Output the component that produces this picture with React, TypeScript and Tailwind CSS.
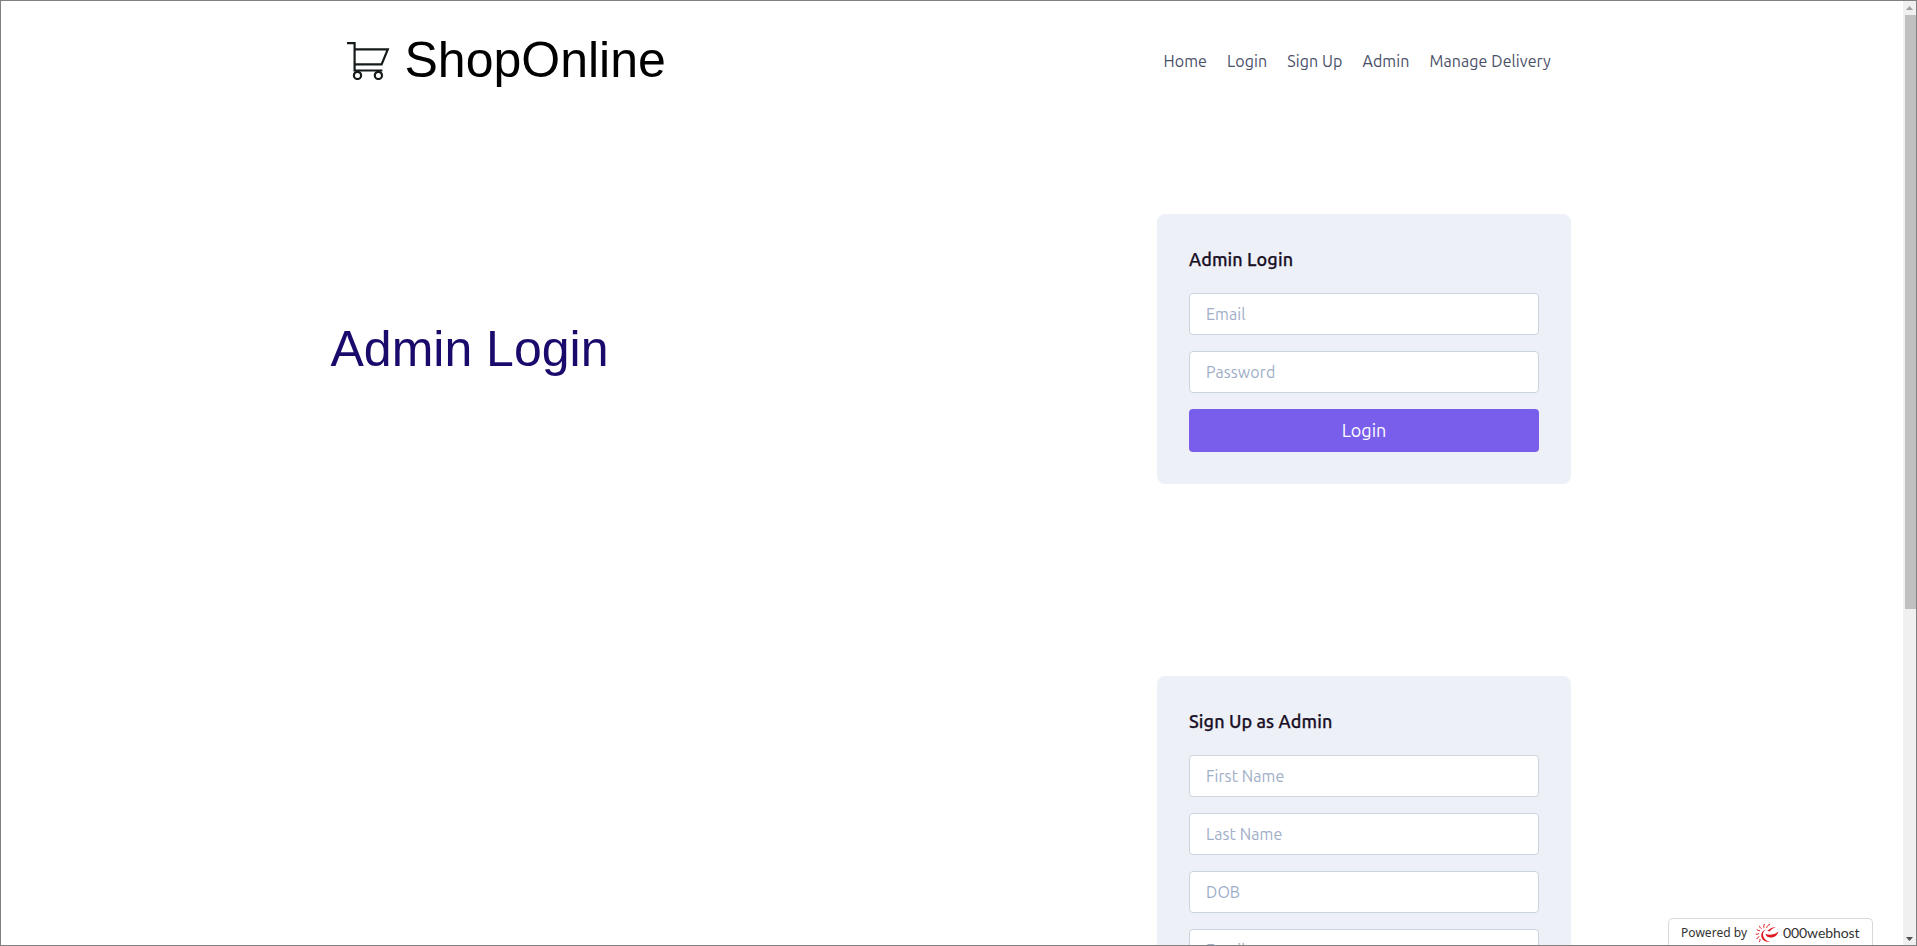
import React from "react";

const links = ["Home", "Login", "Sign Up", "Admin", "Manage Delivery"];

function CartIcon() {
  return (
    <svg width="44" height="40" viewBox="0 0 44 40" fill="none" stroke="#151a1a" strokeWidth="2.2" className="block">
      <path d="M1 3.2h7.600v27.300h27.800" />
      <path d="M8.600 9.300h33.200l-6.200 15H8.600" />
      <circle cx="11.500" cy="35.400" r="3.600" />
      <circle cx="32.400" cy="35.400" r="3.600" />
    </svg>
  );
}

function HostLogo() {
  return (
    <svg width="24" height="20" viewBox="0 0 24 20" fill="none" stroke="#e0151f" strokeLinecap="round" className="block shrink-0">
      <path d="M11 6.500C8 8 7.300 11.500 8.800 14.400c1.400 2.600 3.800 3.900 6.400 4.100-3.200 1.100-7.200-.3-8.500-3.700C5.400 11.200 7.300 7.500 11 6.500z" fill="#e0151f" stroke="none" />
      <path d="M10.500 11c4 1.600 9.200.8 13-2.400-1.300 4.400-5 6.400-8.600 5.900-2.500-.3-4-1.500-4.400-3.500z" fill="#e0151f" stroke="none" />
      <path d="M12.500 7.800c2.300-2.400 5-3.900 8.300-3.600-2.600.8-4.500 2-6.300 4.300z" fill="#e0151f" stroke="none" />
      <path d="M11.700 4.500c.4-1.500 1.500-2.600 3-3M8.800 4.300c-.2-1.100 0-2.100.5-3M6.300 5.500C5.200 4.900 4.600 4 4.500 3.200M4.700 7.800c-1.100-.1-2-.5-2.700-1.100M3.700 10.700c-.8.500-1.700.7-2.700.5M3.900 13.600c-.4.900-1.100 1.600-2 2M5.100 16.300c.1.900-.2 1.600-.7 2.300" strokeWidth="1" />
    </svg>
  );
}

function Field({ label }: { label: string }) {
  return (
    <input
      placeholder={label}
      className="block h-[42px] w-full rounded-[4px] border border-[#cbd5e0] bg-white px-4 pt-0 pb-px text-base leading-6 tracking-[0.08px] text-[#4a5568] placeholder:text-[#a0aec8] placeholder:opacity-100"
    />
  );
}

function Card({ title, className, children }: { title: string; className: string; children: React.ReactNode }) {
  return (
    <section className={`w-[414px] rounded-lg bg-[#edf0f7] px-8 pt-8 ${className}`}>
      <h2 className="h-[47px] text-lg leading-[27px] font-medium tracking-[0.1px] whitespace-nowrap text-[#1a1026] [-webkit-text-stroke:0.25px_#1a1026]">{title}</h2>
      <div className="flex flex-col gap-4">{children}</div>
    </section>
  );
}

export default function App() {
  return (
    <div className="flex h-[946px] w-[1917px] overflow-hidden border border-[#808080] bg-white font-['Ubuntu','Noto_Sans',sans-serif]">
      <div className="relative min-w-0 flex-1 overflow-hidden pl-[329px]">
        <header className="flex h-[120px] items-center pb-[2px]">
          <div className="flex w-[833.500px] items-center pl-4">
            <CartIcon />
            <span className="ml-[14.500px] font-['Liberation_Sans',sans-serif] text-[50px] leading-[60px] text-black">ShopOnline</span>
          </div>
          <nav className="flex gap-5 pt-[2px] text-base tracking-[0.09px] text-[#4a5068]">
            {links.map((label) => (
              <a key={label} className="whitespace-nowrap">{label}</a>
            ))}
          </nav>
        </header>

        <main className="flex">
          <h1 className="w-[827px] pt-[198px] pl-[0.5px] font-['Liberation_Sans',sans-serif] text-[50px] leading-[60px] text-[#190a6b]">Admin Login</h1>
          <div className="pt-[93px]">
            <Card title="Admin Login" className="h-[270px]">
              <Field label="Email" />
              <Field label="Password" />
              <button className="h-[43px] w-full rounded-[4px] bg-[#795eeb] pb-[2px] text-lg leading-7 text-white">Login</button>
            </Card>
            <Card title="Sign Up as Admin" className="mt-[192px] h-[500px]">
              <Field label="First Name" />
              <Field label="Last Name" />
              <Field label="DOB" />
              <Field label="Email" />
            </Card>
          </div>
        </main>

        <div className="absolute right-[30px] bottom-0 flex h-[27px] w-[205px] items-center rounded-t-[5px] border border-b-0 border-[#d9d9d9] bg-white pt-px pl-[12px] font-['Noto_Sans',sans-serif] text-[#333]">
          <span className="w-[74px] text-[12px] tracking-[0.05px] whitespace-nowrap">Powered by</span>
          <HostLogo />
          <span className="ml-[4px] font-['Lato',sans-serif] text-[14px] tracking-[-0.08px] whitespace-nowrap">000webhost</span>
        </div>
      </div>

      <div className="flex w-[13px] flex-col items-end bg-[#f0f0f0]">
        <svg width="13" height="14" viewBox="0 0 13 14" className="block shrink-0">
          <path d="M3 9h7L6.500 5z" fill="#a0a0a0" />
        </svg>
        <div className="h-[594px] w-[11px] bg-[#c0c0c0]" />
        <svg width="13" height="14" viewBox="0 0 13 14" className="mt-auto block shrink-0">
          <path d="M3 6h7L6.500 10z" fill="#505050" />
        </svg>
      </div>
    </div>
  );
}
